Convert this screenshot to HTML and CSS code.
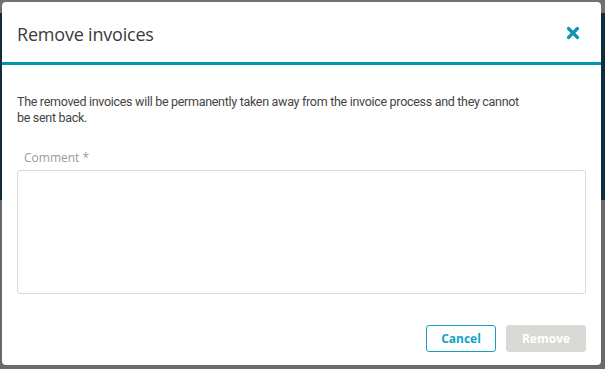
FILE: index.html
```html
<!DOCTYPE html>
<html lang="en">
<head>
    <meta charset="UTF-8">
    <meta name="viewport" content="width=device-width, initial-scale=1.0">
    <title>Remove invoices</title>
    <link rel="stylesheet" href="styles.css">
</head>
<body>
    <div class="backdrop">
        <div class="modal">
            <header class="modal-header">
                <h1>Remove invoices</h1>
                <button class="close" aria-label="Close">
                    <svg width="14" height="14" viewBox="0 0 14 14">
                        <path d="M2.5 2.5 L11.5 11.5 M11.5 2.5 L2.5 11.5" stroke="#0f93b0" stroke-width="3.2" stroke-linecap="round"/>
                    </svg>
                </button>
            </header>

            <section class="modal-body">
                <p class="info">The removed invoices will be permanently taken away from the invoice process and they cannot be sent back.</p>

                <label class="field-label" for="comment">Comment *</label>
                <textarea id="comment" class="comment"></textarea>
            </section>

            <footer class="modal-footer">
                <button class="btn btn-secondary">Cancel</button>
                <button class="btn btn-primary" disabled>Remove</button>
            </footer>
        </div>
    </div>
</body>
</html>
```

FILE: styles.css
```css
/* Base */
* {
    margin: 0;
    padding: 0;
    box-sizing: border-box;
}

body {
    font-family: 'Open Sans', 'Noto Sans', sans-serif;
    color: #444;
    background: #6c6c6c;
}

/* Backdrop behind the dialog */
.backdrop {
    width: 605px;
    height: 369px;
    padding: 2px 4px 4px 2px;
    background: linear-gradient(to bottom, #717171 0, #717171 13px, #0f2d3d 13px, #0f2d3d 200px, #6a6a6a 200px);
}

/* Dialog */
.modal {
    display: flex;
    flex-direction: column;
    height: 100%;
    background: #fff;
    border-radius: 4px;
}

.modal-header {
    display: flex;
    justify-content: space-between;
    align-items: center;
    height: 63px;
    padding: 0 21px 0 15px;
    border-bottom: 3px solid #0096b1;
}

.modal-header h1 {
    font-size: 18px;
    font-weight: 500;
    color: #3b3b3b;
    letter-spacing: -0.2px;
    padding-top: 4px;
}

.close {
    display: flex;
    border: none;
    background: none;
    padding: 0;
    margin-top: 1px;
    cursor: pointer;
}

.modal-body {
    display: flex;
    flex-direction: column;
    flex: 1;
    padding: 29px 15px 0 15px;
}

.info {
    max-width: 513px;
    font-family: Roboto, 'Open Sans', sans-serif;
    font-size: 12.5px;
    line-height: 16px;
    letter-spacing: -0.3px;
    color: #444;
}

.field-label {
    margin-top: 23px;
    padding-left: 7px;
    font-size: 12px;
    color: #9a9a9a;
}

.comment {
    margin-top: 4px;
    height: 124px;
    border: 1px solid #d9d9d9;
    border-radius: 3px;
    resize: none;
    font-family: inherit;
}

.modal-footer {
    display: flex;
    justify-content: flex-end;
    gap: 10px;
    padding: 0 15px 13px 0;
}

.btn {
    height: 27px;
    font-family: inherit;
    font-size: 12px;
    font-weight: 700;
    border-radius: 3px;
    cursor: pointer;
}

.btn-secondary {
    width: 70px;
    color: #16a2c0;
    background: #fff;
    border: 1px solid #16a2c0;
}

.btn-primary {
    width: 80px;
    color: #fff;
    background: #d9dad6;
    border: 1px solid #d9dad6;
}
```
